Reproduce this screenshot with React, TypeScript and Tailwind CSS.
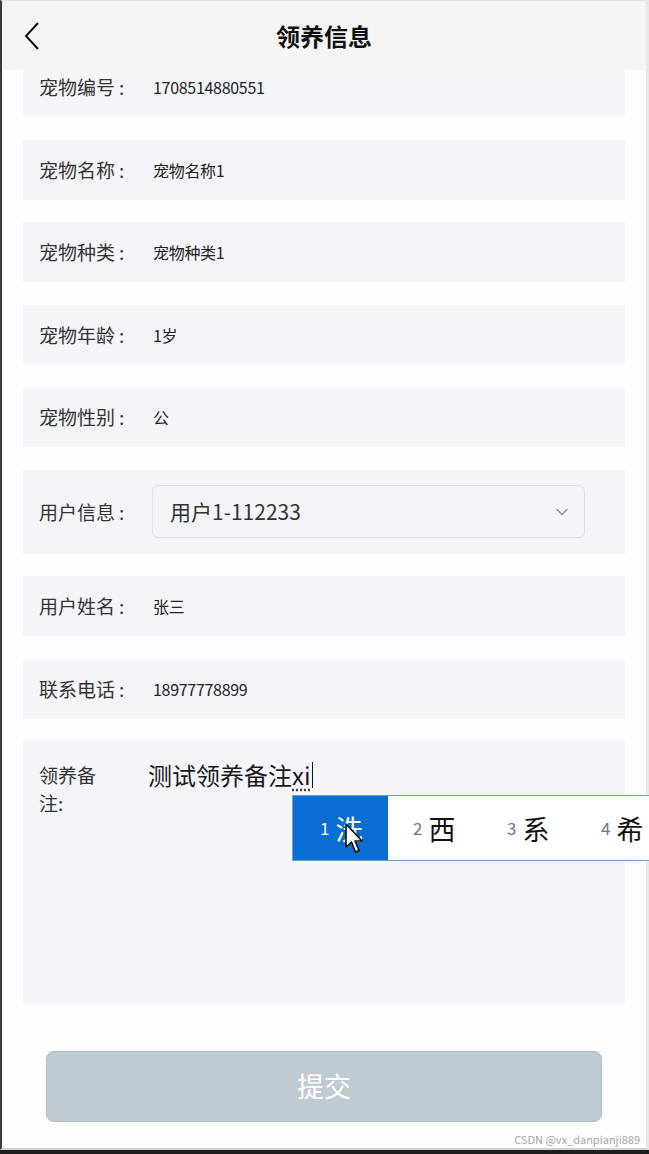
import { ChevronDown } from 'lucide-react';

interface InfoRowProps {
  label: string;
  value: string;
}

function InfoRow({ label, value }: InfoRowProps) {
  return (
    <div className="h-[60px] shrink-0 bg-[#f4f5f9] flex items-center pl-[16px]">
      <div className="w-[114px] shrink-0 text-[19px] leading-[28px] text-[#333]">
        {label}
        <span className="ml-[4px]">:</span>
      </div>
      <div className="text-[16px] tracking-[-0.3px] text-[#222]">{value}</div>
    </div>
  );
}

const candidates = [
  { n: '1', c: '洗' },
  { n: '2', c: '西' },
  { n: '3', c: '系' },
  { n: '4', c: '希' },
];

function Cursor() {
  return (
    <svg width="20" height="36" viewBox="0 0 20 36" className="absolute left-[52px] top-[27px]">
      <path
        d="M1 1 L1 24 L6.5 19 L10.5 29 L14 27.5 L10 18 L17 18 Z"
        fill="#fff"
        stroke="#111"
        strokeWidth="1.6"
        strokeLinejoin="round"
      />
    </svg>
  );
}

export default function App() {
  return (
    <div className="w-[649px] h-[1154px] flex flex-col bg-[#1e1e1e] font-['Noto_Sans_CJK_SC',sans-serif] overflow-hidden">
      <div className="h-[1150px] flex flex-col bg-[#fdfdfd] border-l-[2px] border-l-[#3a3a3a] border-r-[3px] border-r-[#e6e8eb] border-b-[2px] border-b-[#cfd2d6] border-t border-t-[#e4e4e4]">
        {/* header */}
        <div className="h-[69px] shrink-0 bg-[#f5f5f4] flex items-center px-[20px] z-10">
          <svg width="20" height="30" viewBox="0 0 20 30" className="shrink-0">
            <polyline points="16,2 4,15 16,28" fill="none" stroke="#111" strokeWidth="2" />
          </svg>
          <div className="flex-1 text-center text-[24px] font-bold text-[#111] pr-[20px] leading-none">领养信息</div>
        </div>

        {/* content */}
        <div className="flex-1 flex flex-col">
          <div className="-mt-[13px] px-[21px] flex flex-col gap-[22.5px]">
            <InfoRow label="宠物编号" value="1708514880551" />
            <InfoRow label="宠物名称" value="宠物名称1" />
            <InfoRow label="宠物种类" value="宠物种类1" />
            <InfoRow label="宠物年龄" value="1岁" />
            <InfoRow label="宠物性别" value="公" />

            <div className="h-[84px] shrink-0 bg-[#f4f5f9] flex items-center pl-[16px]">
              <div className="w-[113px] shrink-0 text-[19px] leading-[28px] text-[#333]">
                用户信息
                <span className="ml-[4px]">:</span>
              </div>
              <div className="w-[433px] h-[53px] rounded-[6px] border border-[#dde1e6] bg-[#f2f4f7] flex items-center justify-between pl-[17px] pr-[12px]">
                <span className="text-[21px] text-[#333]">用户1-112233</span>
                <ChevronDown size={20} strokeWidth={1.5} className="text-[#8a8f96]" />
              </div>
            </div>

            <InfoRow label="用户姓名" value="张三" />
            <InfoRow label="联系电话" value="18977778899" />

            <div className="h-[264px] shrink-0 bg-[#f4f5f9] flex items-start pl-[16px] pt-[20px] relative">
              <div className="w-[72px] shrink-0 text-[19px] leading-[28px] text-[#333]">
                领养备注:
              </div>
              <div className="ml-[37px] text-[24px] leading-[28px] text-[#1a1a1a] flex items-center">
                测试领养备注
                <span className="underline decoration-dotted decoration-[#444] underline-offset-[4px]">xi</span>
                <span className="w-[1.5px] h-[26px] bg-[#111] ml-[1px]" />
              </div>

              {/* IME candidate bar */}
              <div className="absolute left-[269px] top-[54px] h-[66px] w-[420px] bg-white border border-[#6f9fd2] flex items-center">
                {candidates.map((item, i) => (
                  <div
                    key={item.n}
                    className={
                      i === 0
                        ? 'relative w-[95px] h-full bg-[#0a6dd1] flex items-center pl-[27px] text-white'
                        : 'w-[94px] h-full flex items-center pl-[25px] text-[#111]'
                    }
                  >
                    <span className={i === 0 ? 'text-[17px] mr-[6px] text-white' : 'text-[17px] mr-[6px] text-[#777]'}>
                      {item.n}
                    </span>
                    <span className="text-[27px] leading-none">{item.c}</span>
                    {i === 0 && <Cursor />}
                  </div>
                ))}
              </div>
            </div>
          </div>

          <div className="mt-[46px] px-[44px]">
            <div className="h-[71px] rounded-[8px] bg-[#bfcad3] border border-[#b0bbc4] flex items-center justify-center text-white text-[27px]">
              提交
            </div>
          </div>

          <div className="mt-auto pb-[3px] pr-[6px] text-right text-[11px] leading-none text-[#a3a7ac]">
            CSDN @vx_danpianji889
          </div>
        </div>
      </div>
      <div className="flex-1 bg-[#1e1e1e]" />
    </div>
  );
}
